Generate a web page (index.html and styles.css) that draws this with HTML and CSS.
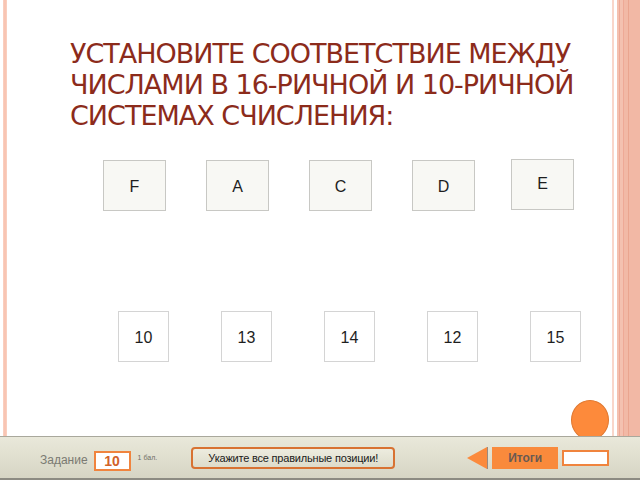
FILE: index.html
```html
<!DOCTYPE html>
<html lang="ru">
<head>
<meta charset="utf-8">
<title>Тест</title>
<link rel="stylesheet" href="styles.css">
</head>
<body>
<div class="slide">
  <h1 class="title">УСТАНОВИТЕ СООТВЕТСТВИЕ МЕЖДУ ЧИСЛАМИ В 16-РИЧНОЙ И 10-РИЧНОЙ СИСТЕМАХ СЧИСЛЕНИЯ:</h1>
  <div class="row row-top">
    <div class="card">F</div>
    <div class="card">A</div>
    <div class="card">C</div>
    <div class="card">D</div>
    <div class="card card-shift">E</div>
  </div>
  <div class="row row-bottom">
    <div class="tile">10</div>
    <div class="tile">13</div>
    <div class="tile">14</div>
    <div class="tile">12</div>
    <div class="tile">15</div>
  </div>
  <div class="dot"></div>
  <div class="bar">
    <span class="task-label">Задание</span>
    <span class="task-num">10</span>
    <span class="score">1 бал.</span>
    <span class="hint">Укажите все правильные позиции!</span>
    <span class="back"></span>
    <span class="results">Итоги</span>
    <span class="blank"></span>
  </div>
</div>
</body>
</html>
```
FILE: styles.css
```css
* { box-sizing: border-box; }
html, body { margin: 0; padding: 0; }
body { width: 640px; height: 480px; overflow: hidden; background: #fff; }

.slide {
  position: relative;
  width: 640px;
  height: 480px;
  display: flex;
  flex-direction: column;
  background:
    linear-gradient(to right,
      transparent 0, transparent 3px,
      #fbd3c4 3px, #f7c0ad 5px, #fbd3c4 7px,
      transparent 7px, transparent 612px,
      #f9d6ca 612px, #f9d6ca 614px,
      transparent 614px, transparent 617px,
      #f4c1b0 617px, #f4c1b0 619px,
      #eea996 619px, #eea996 620px,
      #f4c1b0 620px, #f4c1b0 623px,
      #eea996 623px, #eea996 624px,
      #f2b9a6 624px, #f2b9a6 628px,
      #eaa58f 628px, #eaa58f 629px,
      #f2b8a5 629px, #f2b8a5 640px);
}

.title {
  margin: 38px 0 0 70px;
  width: 530px;
  font-family: "DejaVu Sans", sans-serif;
  font-weight: normal;
  font-size: 27px;
  line-height: 31px;
  color: #8c2b1b;
  letter-spacing: -1px;
}

.row { display: flex; }
.row-top { margin: 29px 0 0 103px; gap: 40px; }
.row-bottom { margin: 100px 0 0 118px; gap: 52px; }

.card, .tile {
  display: flex;
  align-items: center;
  justify-content: center;
  font-family: "Liberation Sans", Arial, sans-serif;
  font-size: 16px;
  color: #1e1e1e;
}
.card {
  width: 63px;
  height: 51px;
  background: #f8f8f4;
  border: 1px solid #c8c8c4;
  padding-top: 3px;
}
.card-shift { margin-left: -4px; margin-top: -1px; padding-top: 0; padding-bottom: 2px; }
.tile {
  width: 51px;
  height: 51px;
  background: #fff;
  border: 1px solid #d4d4d4;
  padding-top: 3px;
}

.dot {
  position: absolute;
  left: 571px;
  top: 400px;
  width: 38px;
  height: 40px;
  border-radius: 50%;
  background: #fd8a3b;
  border: 1px solid #e07830;
}

.bar {
  position: relative;
  margin-top: auto;
  height: 44px;
  display: flex;
  align-items: center;
  padding-left: 40px;
  background: linear-gradient(to bottom, #e9e8da 0%, #e0dfcf 50%, #d6d5c4 100%);
  border-top: 1px solid #a9a89c;
  border-bottom: 2px solid #8c8b82;
  font-family: "Liberation Sans", Arial, sans-serif;
}
.task-label {
  font-size: 12px;
  color: #7a7a72;
  margin-top: 5px;
}
.task-num {
  margin-left: 6px;
  margin-top: 6px;
  width: 37px;
  height: 20px;
  background: #fff;
  border: 2px solid #f0843e;
  color: #d2622a;
  font-weight: bold;
  font-size: 14px;
  line-height: 17px;
  text-align: center;
}
.score {
  margin-left: 7px;
  font-size: 7px;
  color: #6e6e66;
  margin-top: 0;
}
.hint {
  margin-left: 34px;
  width: 204px;
  height: 22px;
  border: 2px solid #d87232;
  border-radius: 4px;
  background: linear-gradient(to bottom, #edecdf, #dddccb);
  font-size: 11px;
  line-height: 18px;
  text-align: center;
  color: #1a1a1a;
  letter-spacing: -0.2px;
}
.back {
  margin-left: 72px;
  width: 0;
  height: 0;
  border-top: 11px solid transparent;
  border-bottom: 11px solid transparent;
  border-right: 20px solid #fb8a3c;
  box-shadow: 1px 0 0 #9a8a80;
}
.results {
  margin-left: 5px;
  width: 66px;
  height: 22px;
  background: #f98a3c;
  color: #6a5a52;
  font-weight: bold;
  font-size: 12px;
  line-height: 22px;
  text-align: center;
}
.blank {
  margin-left: 4px;
  width: 47px;
  height: 16px;
  background: #fff;
  border: 2px solid #f0843e;
}
```
